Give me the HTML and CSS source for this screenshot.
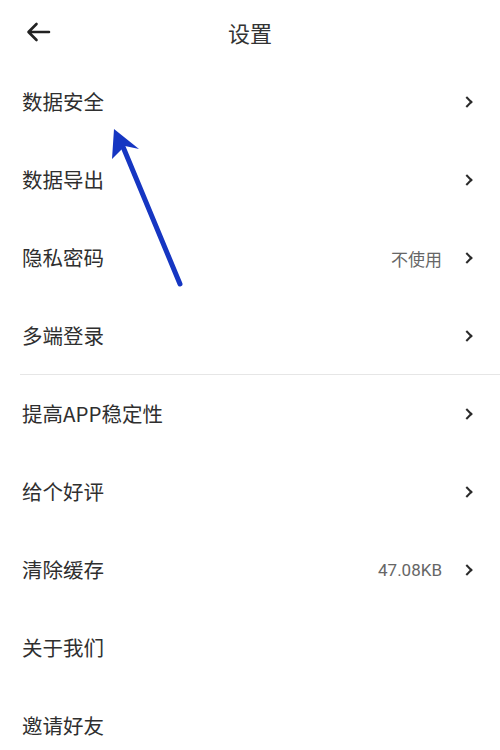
FILE: index.html
```html
<!DOCTYPE html>
<html lang="zh-CN">
<head>
  <meta charset="UTF-8" />
  <meta name="viewport" content="width=device-width, initial-scale=1.0"/>
  <title>设置</title>
  <link rel="stylesheet" href="styles.css">
</head>
<body>

  <div class="header">
    <svg class="back" width="26" height="20" viewBox="0 0 26 20">
      <path d="M24 10H4M11.5 2L3.5 10L11.5 18" fill="none" stroke="#222" stroke-width="2.6" stroke-linecap="round" stroke-linejoin="round"/>
    </svg>
    <h1>设置</h1>
  </div>

  <div class="list">
    <div class="row"><span class="label">数据安全</span><span class="chev"></span></div>
    <div class="row"><span class="label">数据导出</span><span class="chev"></span></div>
    <div class="row"><span class="label">隐私密码</span><span class="value">不使用</span><span class="chev"></span></div>
    <div class="row"><span class="label">多端登录</span><span class="chev"></span></div>
  </div>

  <div class="divider"></div>

  <div class="list">
    <div class="row"><span class="label">提高APP稳定性</span><span class="chev"></span></div>
    <div class="row"><span class="label">给个好评</span><span class="chev"></span></div>
    <div class="row"><span class="label">清除缓存</span><span class="value">47.08KB</span><span class="chev"></span></div>
    <div class="row"><span class="label">关于我们</span></div>
    <div class="row"><span class="label">邀请好友</span></div>
  </div>

  <!-- annotation arrow drawn over the list -->
  <svg class="pointer" width="500" height="750" viewBox="0 0 500 750">
    <line x1="180" y1="284" x2="121" y2="142" stroke="#1636c2" stroke-width="5" stroke-linecap="round"/>
    <path d="M114 129L139 149L125 146L112 159Z" fill="#1636c2"/>
  </svg>

</body>
</html>
```

FILE: styles.css
```css
body {
  margin: 0;
  background: #fff;
  font-family: "Noto Sans CJK SC", "Noto Sans", sans-serif;
  color: #333;
  position: relative;
  overflow: hidden;
}

.header {
  height: 63px;
  display: flex;
  align-items: center;
  justify-content: center;
  position: relative;
}

.header h1 {
  margin: 0;
  font-size: 22px;
  font-weight: normal;
  color: #333;
}

.back {
  position: absolute;
  left: 25px;
  top: 22px;
}

.row {
  height: 78px;
  display: flex;
  align-items: center;
  padding: 0 29px 0 22px;
}

.label {
  flex: 1;
  font-size: 20.5px;
  color: #2f2f2f;
  margin-top: -2px;
}

.value {
  font-family: Roboto, "Noto Sans CJK SC", sans-serif;
  font-size: 17px;
  color: #666;
  margin-right: 21px;
}

.chev {
  width: 6px;
  height: 6px;
  border-right: 2px solid #2a2a2a;
  border-top: 2px solid #2a2a2a;
  transform: rotate(45deg);
}

.divider {
  height: 1px;
  background: #e6e6e6;
  margin: -1px 0 0 20px;
}

.pointer {
  position: absolute;
  left: 0;
  top: 0;
  pointer-events: none;
}
```
